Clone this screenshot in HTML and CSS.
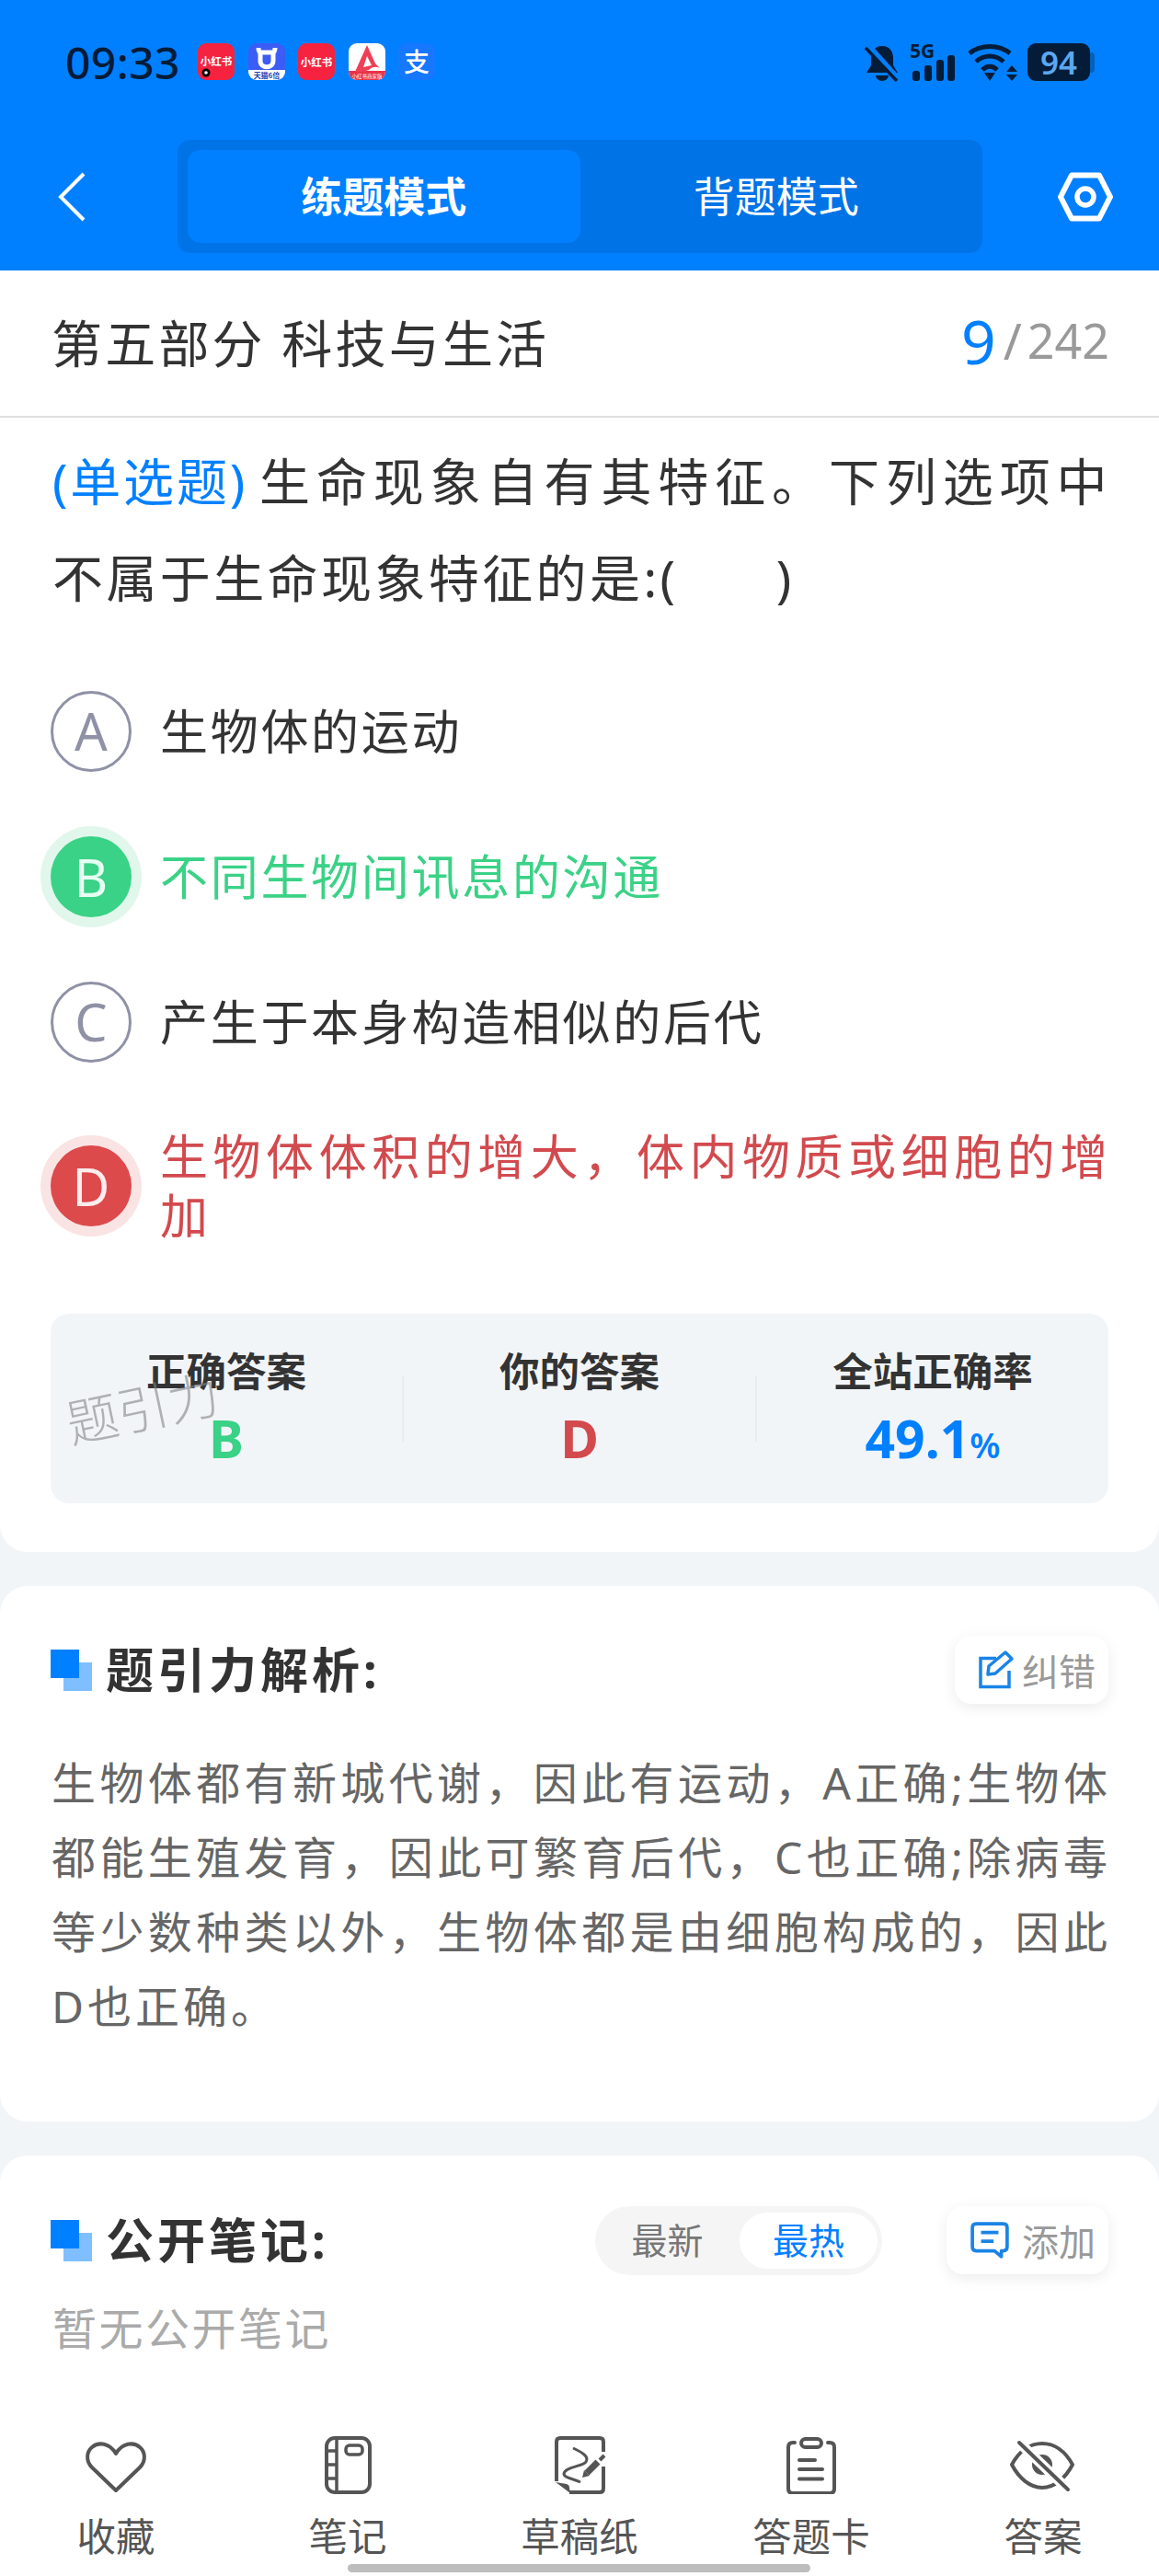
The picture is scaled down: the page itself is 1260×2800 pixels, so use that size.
FILE: index.html
```html
<!DOCTYPE html>
<html lang="zh-CN">
<head>
<meta charset="utf-8">
<title>题引力</title>
<link rel="stylesheet" href="styles.css">
</head>
<body>
<div class="app">
  <header class="top">
    <div class="status">
      <span class="time">09:33</span>
      <div class="notifs">
        <svg class="notif" viewBox="0 0 40 40"><rect width="40" height="40" rx="9" fill="#f5233f"/><text x="20" y="24" class="nt">小红书</text><circle cx="9" cy="32" r="4.500" fill="#000"/><circle cx="9" cy="32" r="1.800" fill="#fff"/></svg>
        <svg class="notif" viewBox="0 0 40 40"><rect width="40" height="40" rx="9" fill="#3b5cf5"/><path d="M0 29H40V31A9 9 0 0 1 31 40H9A9 9 0 0 1 0 31Z" fill="#fff"/><path d="M11 5C11 9 12 10 14 10H26C28 10 29 9 29 5M13 10V19C13 28 27 28 27 19V10" fill="none" stroke="#fff" stroke-width="5"/><text x="20" y="38" class="nt2">天猫6倍</text></svg>
        <svg class="notif" viewBox="0 0 40 40"><rect width="40" height="40" rx="9" fill="#f5233f"/><text x="20" y="25" class="nt">小红书</text></svg>
        <svg class="notif" viewBox="0 0 40 40"><rect width="40" height="40" rx="9" fill="#fff"/><path d="M0 30H40V31A9 9 0 0 1 31 40H9A9 9 0 0 1 0 31Z" fill="#e8334a"/><path d="M20 2L29 22L34 27C30 25 26 25 22 29L15 31H7Z" fill="#ee3f57"/><path d="M20 14L25 24L16 26Z" fill="#fff"/><text x="20" y="38" class="nt3">小红书商家版</text></svg>
        <svg class="notif" viewBox="0 0 40 40"><rect width="40" height="40" rx="9" fill="#1677ff"/><text x="20" y="31" class="nt4">支</text></svg>
      </div>
      <div class="sys">
        <svg class="bell" viewBox="0 0 40 42"><path d="M20 3C12 3 8 9 8 16V24L3 32H37L32 24V16C32 9 28 3 20 3Z" fill="#041c38"/><path d="M13 35A7 6 0 0 0 27 35Z" fill="#041c38"/><path d="M4 2L38 40" stroke="#0080ff" stroke-width="7"/><path d="M2 5L36 41" stroke="#041c38" stroke-width="3.500"/></svg>
        <svg class="signal" viewBox="0 -8 50 49"><text x="0" y="16" class="fiveg">5G</text><rect x="3" y="30" width="8" height="11" rx="3" fill="#041c38"/><rect x="16" y="24" width="8" height="17" rx="3" fill="#041c38"/><rect x="29" y="18" width="8" height="23" rx="3" fill="#041c38"/><rect x="41" y="13" width="8" height="28" rx="3" fill="#041c38"/></svg>
        <svg class="wifi" viewBox="0 0 54 41"><path d="M2 11C14 1 34 1 46 11" fill="none" stroke="#041c38" stroke-width="5"/><path d="M9 20C18 12 30 12 39 20" fill="none" stroke="#041c38" stroke-width="5"/><path d="M16 29C21 24 27 24 32 29" fill="none" stroke="#041c38" stroke-width="5"/><path d="M18 32H30L24 41Z" fill="#041c38"/><path d="M48 24L54 31H42ZM42 34H54L48 41Z" fill="#041c38"/></svg>
        <div class="battery"><span class="batt-body">94</span><i class="batt-tip"></i></div>
      </div>
    </div>
    <nav class="nav">
      <svg class="back" viewBox="0 0 30 54"><path d="M28 2L3 27L28 52" fill="none" stroke="#fff" stroke-width="4"/></svg>
      <div class="seg">
        <span class="seg-item seg-on">练题模式</span>
        <span class="seg-item">背题模式</span>
      </div>
      <svg class="gear" viewBox="0 0 60 54"><path d="M15 3.500H45L57 27L45 50.500H15L3 27Z" fill="none" stroke="#fff" stroke-width="6" stroke-linejoin="round"/><circle cx="30" cy="27" r="9" fill="none" stroke="#fff" stroke-width="5.500"/></svg>
    </nav>
  </header>

  <main class="main">
    <section class="card card-q">
      <div class="title-row">
        <h1 class="title">第五部分 科技与生活</h1>
        <div class="progress"><b class="cur">9</b><span class="slash">/</span><span class="total">242</span></div>
      </div>
      <div class="question">
        <p class="q-first"><span class="qtype">(单选题)</span><span class="q-lead">生命现象自有其特征。下列选项中</span></p>
        <p class="q-next">不属于生命现象特征的是:(&nbsp;&nbsp;&nbsp;&nbsp;&nbsp;&nbsp;)</p>
      </div>
      <ul class="options">
        <li class="option"><span class="mark">A</span><span class="opt-text">生物体的运动</span></li>
        <li class="option right"><span class="mark">B</span><span class="opt-text">不同生物间讯息的沟通</span></li>
        <li class="option"><span class="mark">C</span><span class="opt-text">产生于本身构造相似的后代</span></li>
        <li class="option wrong"><span class="mark">D</span><span class="opt-text">生物体体积的增大，体内物质或细胞的增加</span></li>
      </ul>
      <div class="stats">
        <div class="stat"><span class="stat-label">正确答案</span><span class="stat-val green">B</span></div>
        <i class="stat-div"></i>
        <div class="stat"><span class="stat-label">你的答案</span><span class="stat-val red">D</span></div>
        <i class="stat-div"></i>
        <div class="stat"><span class="stat-label">全站正确率</span><span class="stat-val blue">49.1<small class="pct">%</small></span></div>
        <span class="watermark">题引力</span>
      </div>
    </section>

    <section class="card card-exp">
      <div class="head">
        <span class="squares"><i class="sq-a"></i><i class="sq-b"></i></span>
        <h2 class="head-title">题引力解析:</h2>
        <button class="chip">
          <svg class="chip-ico" viewBox="40 30 42 44"><path d="M62 39.500H45V70.500H76V53" fill="none" stroke="#1a84e6" stroke-width="3.500"/><path d="M54 48L72 33L79 40L61 56L53 57Z" fill="none" stroke="#1a84e6" stroke-width="3.500" stroke-linejoin="round"/></svg>
          <span>纠错</span>
        </button>
      </div>
      <p class="explain">生物体都有新城代谢，因此有运动，A正确;生物体都能生殖发育，因此可繁育后代，C也正确;除病毒等少数种类以外，生物体都是由细胞构成的，因此D也正确。</p>
    </section>

    <section class="card card-notes">
      <div class="head">
        <span class="squares"><i class="sq-a"></i><i class="sq-b"></i></span>
        <h2 class="head-title">公开笔记:</h2>
        <div class="toggle"><span class="tg">最新</span><span class="tg tg-on">最热</span></div>
        <button class="chip">
          <svg class="chip-ico" viewBox="0 0 40 38"><path d="M6 2H34Q38 2 38 6V26Q38 30 34 30H32V36L25 30H6Q2 30 2 26V6Q2 2 6 2Z" fill="none" stroke="#1a84e6" stroke-width="3.500" stroke-linejoin="round"/><path d="M11 11H29M11 20H24" stroke="#1a84e6" stroke-width="3.500"/></svg>
          <span>添加</span>
        </button>
      </div>
      <p class="empty">暂无公开笔记</p>
    </section>
  </main>

  <footer class="bar">
    <div class="bar-item">
      <svg class="bar-ico" viewBox="11 16 72 64"><path d="M47 76L21 51C14 44 15 34 21 29C28 23 40 24 47 36C54 24 66 23 73 29C79 34 80 44 73 51Z" fill="none" stroke="#555" stroke-width="4" stroke-linejoin="round"/></svg>
      <span>收藏</span>
    </div>
    <div class="bar-item">
      <svg class="bar-ico" viewBox="262 16 72 64"><rect x="275" y="19" width="47" height="59" rx="9" fill="none" stroke="#555" stroke-width="4"/><path d="M286 19V78M275 33H286M275 48H286M275 63H286" stroke="#555" stroke-width="3.500" fill="none"/><rect x="296" y="27" width="18" height="10" rx="4" fill="none" stroke="#555" stroke-width="3.500"/></svg>
      <span>笔记</span>
    </div>
    <div class="bar-item">
      <svg class="bar-ico" viewBox="4 16 72 64"><path d="M66 34V23Q66 19 62 19H19Q15 19 15 23V66M29 78H62Q66 78 66 74V50" fill="none" stroke="#555" stroke-width="4"/><path d="M14 67L26 69Q29 70 29 73L30 79Z" fill="#555"/><path d="M33 30C46 36 50 40 47 45C44 50 24 50 23 58C23 62 32 63 41 67" fill="none" stroke="#555" stroke-width="3"/><path d="M48 57L60 45" stroke="#555" stroke-width="7"/><path d="M43 62L45 54L51 60Z" fill="#555"/><path d="M62 43L67 38" stroke="#555" stroke-width="4"/></svg>
      <span>草稿纸</span>
    </div>
    <div class="bar-item">
      <svg class="bar-ico" viewBox="257 16 72 64"><path d="M275 24H273Q268 24 268 29V74Q268 79 273 79H313Q318 79 318 74V29Q318 24 313 24H311" fill="none" stroke="#555" stroke-width="4" stroke-linecap="round"/><rect x="282" y="20" width="22" height="9" rx="4.500" fill="none" stroke="#555" stroke-width="4"/><path d="M280 43H297M280 53H305M280 63.500H305" stroke="#555" stroke-width="4" stroke-linecap="round"/></svg>
      <span>答题卡</span>
    </div>
    <div class="bar-item">
      <svg class="bar-ico" viewBox="20 16 72 64"><path d="M22 48C30 33 42 25 55 25C68 25 80 33 88 48C80 63 68 73 55 73C42 73 30 63 22 48Z" fill="none" stroke="#555" stroke-width="4" stroke-linejoin="round"/><circle cx="55" cy="48" r="11" fill="#555"/><path d="M29 23L83 75" stroke="#fff" stroke-width="11"/><path d="M30 24L83 75" stroke="#555" stroke-width="4" stroke-linecap="round"/></svg>
      <span>答案</span>
    </div>
    <i class="home"></i>
  </footer>
</div>
</body>
</html>
```

FILE: styles.css
```css
* { box-sizing: border-box; }
html, body { margin: 0; padding: 0; }
body {
  width: 1260px;
  height: 2800px;
  overflow: hidden;
  font-family: "Noto Sans", "Noto Sans CJK SC", sans-serif;
  color: #333;
  background: #f2f5f8;
}
h1, h2, p, ul { margin: 0; padding: 0; }
ul { list-style: none; }
i { display: block; font-style: normal; }

.app { display: flex; flex-direction: column; height: 2800px; }

/* header */
.top { background: #0080ff; height: 294px; flex: none; }
.status {
  height: 152px;
  padding: 47px 70px 0 71px;
  display: flex;
  align-items: flex-start;
}
.time {
  font-size: 48px;
  line-height: 41px;
  font-weight: 500;
  letter-spacing: .4px;
  color: #041c38;
  width: 144px;
}
.notifs { display: flex; gap: 14.5px; }
.notif { width: 40px; height: 40px; display: block; }
.nt { fill: #fff; font-size: 11.500px; font-weight: 700; text-anchor: middle; font-family: "Noto Sans CJK SC", sans-serif; }
.nt2 { fill: #2a3fb0; font-size: 8px; font-weight: 700; text-anchor: middle; font-family: "Noto Sans CJK SC", sans-serif; }
.nt3 { fill: #fff; font-size: 5.500px; text-anchor: middle; font-family: "Noto Sans CJK SC", sans-serif; }
.nt4 { fill: #fff; font-size: 28px; font-weight: 500; text-anchor: middle; font-family: "Noto Sans CJK SC", sans-serif; }
.sys { margin-left: auto; display: flex; align-items: flex-start; }
.bell { width: 40px; height: 42px; display: block; }
.signal { width: 50px; height: 49px; display: block; margin: -8px 0 0 10px; }
.fiveg { fill: #041c38; font-size: 21px; font-weight: 700; font-family: "Noto Sans", sans-serif; }
.wifi { width: 54px; height: 41px; display: block; margin-left: 13px; }
.battery { display: flex; align-items: center; margin-left: 11px; }
.batt-body {
  width: 68px;
  height: 41px;
  border-radius: 9px;
  background: #041c38;
  color: #5aa8f0;
  font-size: 35px;
  font-weight: 600;
  line-height: 41px;
  text-align: center;
}
.batt-tip { width: 5px; height: 22px; border-radius: 0 4px 4px 0; background: #0460b8; }

.nav { height: 142px; padding-bottom: 19px; display: flex; align-items: center; }
.back { width: 30px; height: 54px; margin-left: 63px; display: block; flex: none; }
.seg {
  margin-left: 100px;
  width: 875px;
  height: 123px;
  padding: 11px;
  background: #0073e6;
  border-radius: 14px;
  display: flex;
  flex: none;
}
.seg-item {
  flex: 1;
  border-radius: 14px;
  color: #fff;
  font-size: 45px;
  line-height: 101px;
  text-align: center;
}
.seg-on { background: #0080ff; font-weight: 700; }
.gear { width: 60px; height: 54px; margin-left: 82px; display: block; flex: none; }

/* main */
.main { flex: 1; min-height: 0; overflow: hidden; }
.card { background: #fff; border-radius: 30px; }
.card-q { border-radius: 0 0 30px 30px; height: 1393px; }
.card-exp { margin-top: 37px; height: 582px; padding: 54px 55px 0; }
.card-notes { margin-top: 37px; height: 400px; padding: 55px 55px 0; }

.title-row {
  height: 160px;
  padding: 0 54px 7px 56px;
  border-bottom: 2px solid #dfdfdf;
  display: flex;
  align-items: center;
}
.title { font-size: 55px; font-weight: 400; letter-spacing: 3.200px; color: #333; white-space: nowrap; }
.progress { margin-left: auto; display: flex; align-items: center; color: #999; }
.cur { font-size: 66px; line-height: 80px; font-weight: 400; color: #0080ff; margin-right: 2px; }
.slash { font-size: 54px; line-height: 80px; margin: 0 6px; }
.total { font-size: 52px; line-height: 80px; }

.question {
  margin: 16px 0 0 57px;
  font-size: 55px;
  line-height: 105px;
  color: #333;
}
.q-first { display: flex; white-space: nowrap; }
.qtype { color: #0080ff; letter-spacing: 2.800px; }
.q-lead { margin-left: 13px; letter-spacing: 6.900px; }
.q-next { letter-spacing: 3.400px; white-space: nowrap; }

.options { margin: 71px 55px 0; display: flex; flex-direction: column; gap: 70px; }
.option { display: flex; align-items: center; min-height: 88px; gap: 31px; }
.mark {
  flex: none;
  width: 88px;
  height: 88px;
  border-radius: 50%;
  border: 3px solid #8f91a6;
  color: #8f91a6;
  font-size: 56px;
  font-weight: 400;
  line-height: 80px;
  text-align: center;
}
.opt-text {
  flex: 1;
  margin-right: -2px;
  font-size: 52px;
  line-height: 64px;
  letter-spacing: 2.700px;
  text-align: justify;
  color: #333;
}
.right .mark { background: #3ad286; border: 0; line-height: 88px; color: #e6fff2; box-shadow: 0 0 0 11px #e1f7ec; }
.right .opt-text { color: #3ad286; }
.wrong .mark { background: #dc4a4c; border: 0; line-height: 88px; color: #ffecec; box-shadow: 0 0 0 11px #fae3e3; }
.wrong .opt-text { color: #d24a4e; }

.stats {
  position: relative;
  margin: 75px 55px 0;
  height: 206px;
  padding-top: 37px;
  background: #f2f5f8;
  border-radius: 20px;
  display: flex;
  align-items: flex-start;
}
.stat { flex: 1; display: flex; flex-direction: column; align-items: center; }
.stat-label { font-size: 43.500px; font-weight: 700; line-height: 50px; color: #333; }
.stat-val { font-size: 57px; font-weight: 700; line-height: 64px; margin-top: 16px; }
.pct { font-size: 38px; font-weight: 600; }
.green { color: #3ad286; }
.red { color: #d24a4e; }
.blue { color: #0080ff; }
.stat-div { width: 2px; height: 72px; margin-top: 30px; background: #e9ecef; flex: none; }
.watermark {
  position: absolute;
  left: 16px;
  top: 72px;
  font-size: 56px;
  line-height: 60px;
  font-weight: 300;
  color: rgba(130, 130, 130, .6);
  transform: rotate(-12deg);
  white-space: nowrap;
}

/* section heads */
.head { display: flex; align-items: center; height: 74px; }
.squares { position: relative; width: 45px; height: 45px; flex: none; }
.sq-a, .sq-b { position: absolute; width: 31px; height: 31px; }
.sq-a { left: 0; top: 0; background: #0080ff; z-index: 1; }
.sq-b { left: 14px; top: 14px; background: #80bfff; }
.head-title { margin-left: 15px; padding-bottom: 5px; font-size: 52px; font-weight: 700; letter-spacing: 4px; color: #333; }
.chip {
  margin-left: auto;
  height: 74px;
  width: 167px;
  padding: 0 15px 0 23px;
  border: 0;
  border-radius: 18px;
  background: #fff;
  box-shadow: 0 4px 16px rgba(0, 0, 0, .08);
  display: flex;
  align-items: center;
  gap: 8px;
  font-family: inherit;
  font-size: 40px;
  color: #999;
  white-space: nowrap;
}
.chip-ico { width: 42px; height: 44px; display: block; flex: none; }
.card-notes .chip { width: 176px; margin-left: 70px; padding-left: 26px; gap: 14px; }

.toggle {
  margin-left: auto;
  width: 312px;
  height: 75px;
  padding: 7px 5px 7px 0;
  background: #f5f5f5;
  border-radius: 38px;
  display: flex;
  font-size: 39px;
  line-height: 59px;
  text-align: center;
  color: #777;
}
.tg { flex: none; width: 157px; }
.tg-on { width: 150px; background: #fff; border-radius: 31px; color: #0080ff; }

.explain {
  margin: 45px -3px 0 1px;
  font-size: 48px;
  line-height: 81px;
  letter-spacing: 4px;
  text-align: justify;
  color: #666;
}
.empty { margin: 24px 0 0 2px; font-size: 48px; line-height: 70px; letter-spacing: 2.500px; color: #aaa; }

/* bottom bar */
.bar {
  position: relative;
  flex: none;
  height: 183px;
  background: #fff;
  display: flex;
  padding-top: 30px;
}
.bar-item {
  flex: 1;
  display: flex;
  flex-direction: column;
  align-items: center;
  font-size: 42.500px;
  line-height: 50px;
  color: #555;
}
.bar-ico { width: 72px; height: 64px; margin-bottom: 21px; display: block; }
.home {
  position: absolute;
  left: 378px;
  top: 170px;
  width: 503px;
  height: 9px;
  border-radius: 5px;
  background: #bdbdbd;
}
```
